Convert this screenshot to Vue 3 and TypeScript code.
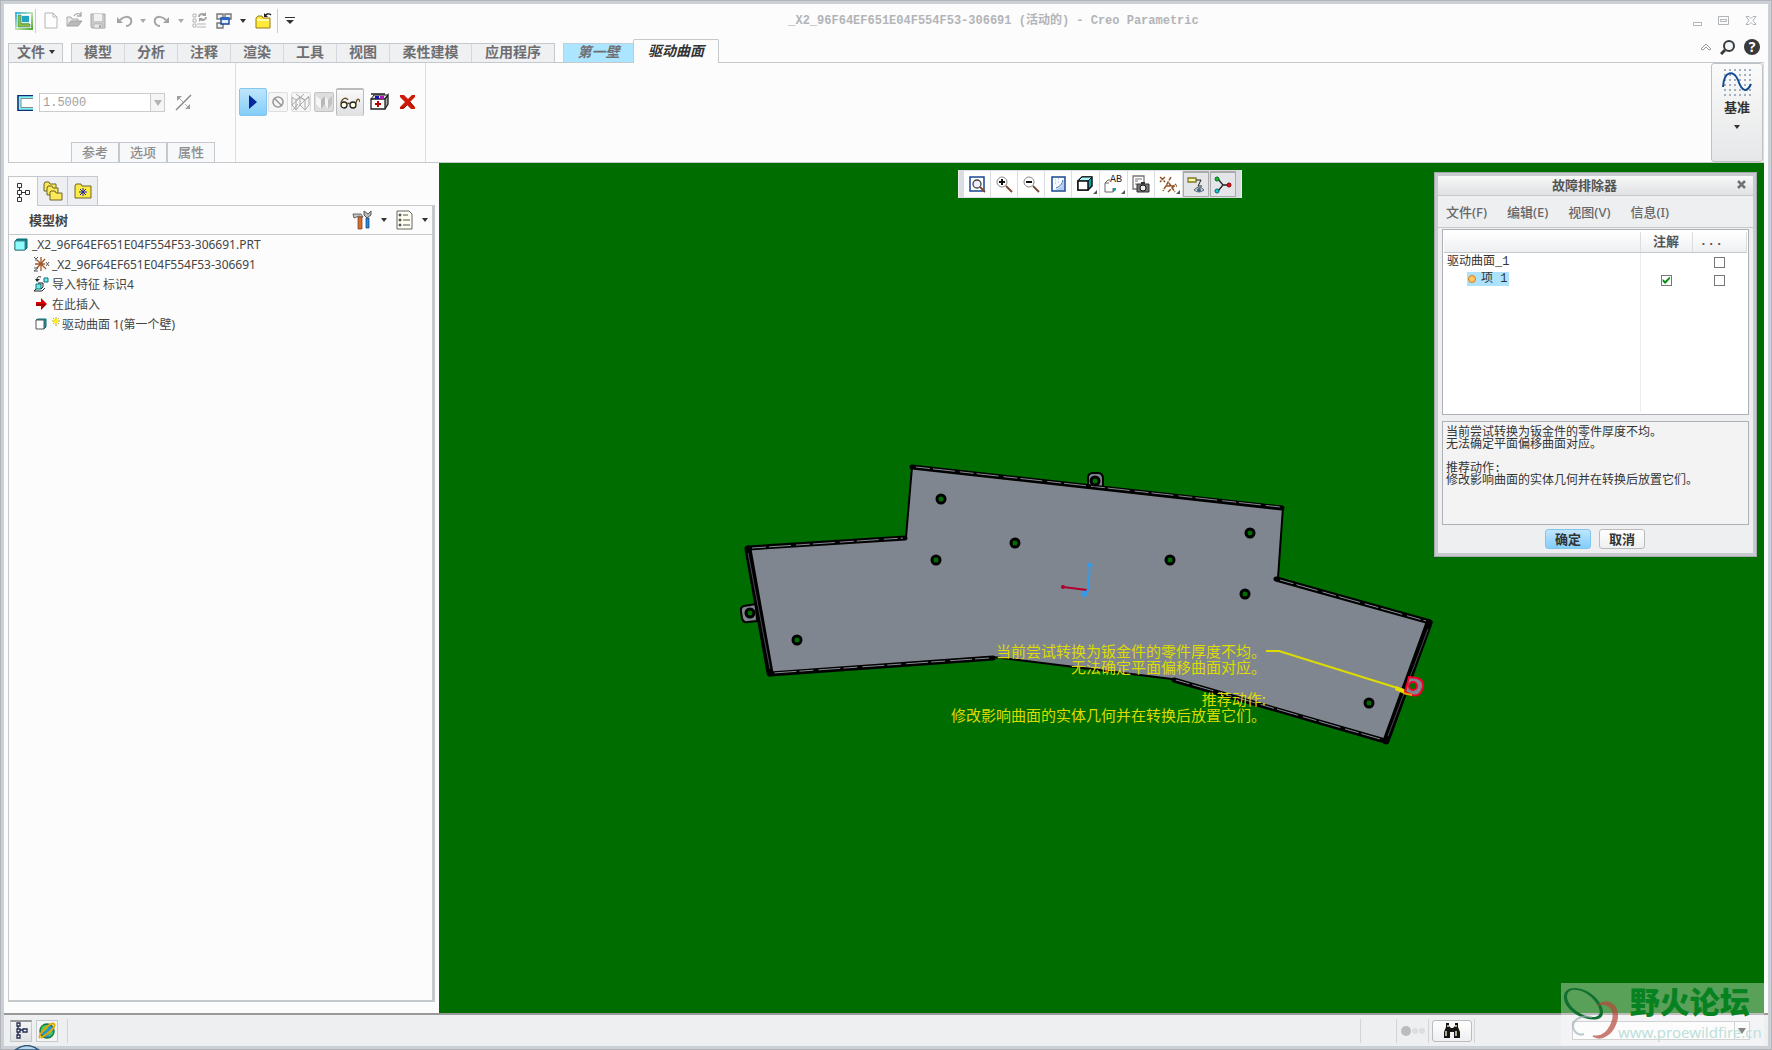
<script setup lang="ts">
import { ref } from 'vue'

interface Hole { x: number; y: number }

const modelName = '_X2_96F64EF651E04F554F53-306691'
const ribbonTabs: string[] = ['模型', '分析', '注释', '渲染', '工具', '视图', '柔性建模', '应用程序']
const optionTabs: string[] = ['参考', '选项', '属性']
const dialogMenus: string[] = ['文件(F)', '编辑(E)', '视图(V)', '信息(I)']
const thickness = ref('1.5000')
const noted = ref(true)
const message = ref('当前尝试转换为钣金件的零件厚度不均。\n无法确定平面偏移曲面对应。\n\n推荐动作:\n修改影响曲面的实体几何并在转换后放置它们。')
const holes: Hole[] = [
  { x: 941, y: 499 }, { x: 1015, y: 543 }, { x: 936, y: 560 }, { x: 797, y: 640 },
  { x: 1250, y: 533 }, { x: 1170, y: 560 }, { x: 1245, y: 594 }, { x: 1369, y: 703 },
  { x: 750, y: 613 }, { x: 1095, y: 481 },
]
</script>

<template>
  <div class="window">
    <header class="titlebar">
      <div class="quick">
        <button class="ib logo" aria-label="Creo">
          <svg width="18" height="18" viewBox="0 0 18 18"><defs><linearGradient id="lg" x1="0" y1="0" x2="1" y2="1"><stop offset="0" stop-color="#35b5e8" /><stop offset=".5" stop-color="#bfe5b0" /><stop offset="1" stop-color="#4fae2e" /></linearGradient></defs><rect x="1" y="1" width="16" height="16" fill="#fff" stroke="url(#lg)" stroke-width="2" /><rect x="3" y="3" width="11" height="12" fill="#a5ca4a" /><path d="M6 3h8v8H6z" fill="#dff3fa" /><path d="M7 4h7v6H7z" fill="#21a5c4" /><path d="M3 3h3v9h9v3H3z" fill="#8fc23f" stroke="#2b7b8a" stroke-width=".6" /></svg>
        </button>
        <button class="ib new" aria-label="新建"><svg width="14" height="17" viewBox="0 0 14 17"><path d="M1 1h8l4 4v11H1zM9 1v4h4" fill="#fdfdfd" stroke="#b4b4b4" /></svg></button>
        <button class="ib open" aria-label="打开"><svg width="17" height="17" viewBox="0 0 17 17"><path d="M1 14V5h4l1 2h6v2" fill="#e8e8e8" stroke="#aaa" /><path d="M1 14l4-5h11l-4 5z" fill="#b9b9b9" stroke="#a4a4a4" /><path d="M8 4c2-3 5-3 7-1M15 0v4h-4" fill="none" stroke="#aaa" stroke-width="1.3" /></svg></button>
        <button class="ib save" aria-label="保存"><svg width="16" height="16" viewBox="0 0 16 16"><path d="M1 1h14v14H2l-1-1z" fill="#c9c9c9" stroke="#a9a9a9" /><path d="M4 1h8v7H4z" fill="#f2f2f2" /><path d="M4 11h8v4H4z" fill="#e9e9e9" stroke="#aaa" stroke-width=".6" /><path d="M9 12h2v3H9z" fill="#aaa" /></svg></button>
        <button class="ib undo" aria-label="撤消"><svg width="16" height="14" viewBox="0 0 16 14"><path d="M3 6c4-4 9-4 11-1 1 4-1 7-5 7" fill="none" stroke="#a2a2a2" stroke-width="2" /><path d="M0 3v6h6z" fill="#a2a2a2" /></svg></button>
        <i class="caret pale"></i>
        <button class="ib redo" aria-label="重做"><svg width="16" height="14" viewBox="0 0 16 14"><path d="M13 6C9 2 4 2 2 5c-1 4 1 7 5 7" fill="none" stroke="#a2a2a2" stroke-width="2" /><path d="M16 3v6h-6z" fill="#a2a2a2" /></svg></button>
        <i class="caret pale"></i>
        <button class="ib regen" aria-label="重新生成"><svg width="16" height="17" viewBox="0 0 16 17"><path d="M1 2h3v3H1zM1 7h3v3H1zM1 12h3v3H1zM5 12h9M5 15h9" fill="none" stroke="#b6b6b6" /><path d="M7 5c0-3 4-4 6-2M14 5c0 3-4 4-6 2" fill="none" stroke="#a0a0a0" stroke-width="1.6" /><path d="M14 0v4h-4zM7 10V6h4z" fill="#a0a0a0" /></svg></button>
        <button class="ib windows" aria-label="窗口"><svg width="16" height="16" viewBox="0 0 16 16"><path d="M1 1h6v5H1zM9 1h6v5H9zM1 10h6v5H1z" fill="#eee" stroke="#777" stroke-width="1.4" /><path d="M5 5h8v6H5z" fill="#e3efff" stroke="#174591" stroke-width="1.4" /><path d="M5 4h8v3H5z" fill="#2e66c8" /></svg></button>
        <i class="caret"></i>
        <button class="ib folder" aria-label="关闭窗口"><svg width="17" height="18" viewBox="0 0 17 18"><path d="M1 16V6l2-2h4l1 2h7v10z" fill="#ffe93b" stroke="#987c12" /><path d="M2 8h12" stroke="#fff9b0" stroke-width="2" /><path d="M10 4c1-2 4-3 6-1" fill="none" stroke="#222" stroke-width="1.4" /><path d="M9 1v4h4z" fill="#222" /></svg></button>
        <i class="vline"></i>
        <button class="ib custom" aria-label="自定义"><svg width="10" height="8" viewBox="0 0 10 8"><path d="M0 0h10v1H0zM1 3h8L5 7z" fill="#333" /></svg></button>
      </div>
      <h1>{{ modelName }} (活动的) - Creo Parametric</h1>
      <div class="winbtns">
        <button class="ib" aria-label="最小化"><svg width="11" height="14" viewBox="0 0 11 14"><path d="M1.500 8.500h8v3h-8z" fill="#fff" stroke="#b0b4b8" /></svg></button>
        <button class="ib" aria-label="还原"><svg width="12" height="10" viewBox="0 0 12 10"><path d="M.5.5h10v8H.5zM2.500 3.500h6v2h-6z" fill="none" stroke="#b0b4b8" /></svg></button>
        <button class="ib" aria-label="关闭"><svg width="12" height="10" viewBox="0 0 12 10"><path d="M1 .5h3l2 2 2-2h3L8 4.500l3 4H8l-2-2-2 2H1l3-4z" fill="#fff" stroke="#b0b4b8" /></svg></button>
      </div>
    </header>

    <nav class="tabs">
      <button class="tab file">文件<i class="caret"></i></button>
      <div class="tabgroup">
        <button v-for="t in ribbonTabs" :key="t" class="tab">{{ t }}</button>
      </div>
      <button class="tab wall">第一壁</button>
      <button class="tab active">驱动曲面</button>
      <div class="tabtools">
        <button class="ib" aria-label="折叠功能区"><svg width="12" height="8" viewBox="0 0 12 8"><path d="M1 6l5-5 5 5-2 1-3-3-3 3z" fill="#fff" stroke="#999" /></svg></button>
        <button class="ib" aria-label="搜索"><svg width="16" height="16" viewBox="0 0 16 16"><circle cx="9" cy="7" r="5" fill="#eff6fc" stroke="#3a3a3a" stroke-width="2" /><path d="M1 15l4-4" stroke="#3a3a3a" stroke-width="3" /></svg></button>
        <button class="ib help" aria-label="帮助">?</button>
      </div>
    </nav>

    <section class="ribbon">
      <div class="group first">
        <div class="controls">
          <svg class="side" width="16" height="16" viewBox="0 0 16 16"><path d="M16 0H0v16h16v-3H4V3h12z" fill="#7ff4f8" /><path d="M16 .5H1v15h15" fill="none" stroke="#0c2d70" stroke-width="1.500" /><path d="M16 3.500H4v9h12" fill="none" stroke="#888" /></svg>
          <div class="combo">
            <input v-model="thickness" aria-label="厚度" disabled />
            <button aria-label="展开" disabled><i class="caret big"></i></button>
          </div>
          <button class="ib flip" aria-label="反向" disabled><svg width="17" height="17" viewBox="0 0 17 17"><path d="M1 16L16 1" stroke="#888" stroke-width="1.400" /><path d="M3 3l5 5M10 10l4 4" stroke="#b0b0b0" /><path d="M2 2h5L2 7zM15 15h-5l5-5z" fill="#a0a0a0" /></svg></button>
        </div>
        <div class="subtabs">
          <button v-for="o in optionTabs" :key="o">{{ o }}</button>
        </div>
      </div>
      <div class="group actions">
        <button class="act play" aria-label="恢复"><svg width="8" height="14" viewBox="0 0 8 14"><path d="M0 0l8 7-8 7z" fill="#06269a" /></svg></button>
        <button class="act small" aria-label="无预览" disabled><svg width="14" height="14" viewBox="0 0 14 14"><circle cx="7" cy="7" r="5" fill="none" stroke="#999" stroke-width="1.600" /><path d="M3 3l8 8" stroke="#999" stroke-width="1.600" /></svg></button>
        <button class="act small wire" aria-label="线框" disabled><svg width="20" height="18" viewBox="0 0 20 18"><path d="M1 4l4 3v10M1 4v8l4 5 4-5V4L5 7M9 4l5 3v10l-5-5M14 7l4-3v8l-4 5M1 12l12-11M5 1l8 6M9 12l9-9M2 17l5-6" fill="none" stroke="#aaa" /></svg></button>
        <button class="act small shade" aria-label="着色" disabled><svg width="20" height="18" viewBox="0 0 20 18"><path d="M2 3l5 4v9L2 11z" fill="#f7f7f7" /><path d="M7 7l4-4v8l-4 5z" fill="#b8b8b8" /><path d="M11 3l3 4v9l-3-5z" fill="#f4f4f4" /><path d="M14 7l4-4v8l-4 5z" fill="#c2c2c2" /></svg></button>
        <button class="act glasses" aria-label="预览"><svg width="20" height="12" viewBox="0 0 20 12"><circle cx="4" cy="8" r="3" fill="#fffee0" stroke="#222" stroke-width="1.300" /><circle cx="13" cy="8" r="3" fill="#fffee0" stroke="#222" stroke-width="1.300" /><path d="M7 7c1-1 2-1 3 0M1 6c1-5 5-6 7-3M16 6c1-5 3-5 4-1" fill="none" stroke="#6b4e20" stroke-width="1.300" /></svg></button>
        <button class="ib kit" aria-label="故障排除"><svg width="19" height="17" viewBox="0 0 19 17"><path d="M1 6l3-4h14l-3 4z" fill="#ddd" stroke="#222" /><path d="M1 1h14M15 6l3-4v9l-3 5" fill="#aaa" stroke="#222" stroke-width="1.300" /><path d="M1 6h14v10H1z" fill="#fff" stroke="#222" stroke-width="1.300" /><path d="M5 3h4v3H5z" fill="#1212b5" /><path d="M10 3h4v3h-4z" fill="#b414b4" /><path d="M7 8h2v2h2v2H9v2H7v-2H5v-2h2z" fill="#b80000" /></svg></button>
        <button class="ib cancel" aria-label="取消特征"><svg width="17" height="16" viewBox="0 0 17 16"><path d="M1 1h4l4 4 4-4h3v2l-5 5 5 5v2h-4l-4-4-4 4H1v-2l5-5-5-5z" fill="#d01a08" /><path d="M2 14h3l3-3M11 8l4 5" fill="none" stroke="#850000" /></svg></button>
      </div>
      <button class="datum">
        <svg width="30" height="30" viewBox="0 0 30 30"><g stroke="#a0b2c2" stroke-width="2" stroke-dasharray="2 3"><path d="M2 2h28M2 7h28M2 12h28M2 17h28M2 22h28M2 27h28" /></g><path d="M1 19C2 2 12 2 16 12c4 12 9 13 13 4" fill="none" stroke="#134a94" stroke-width="2" /></svg>
        <span>基准</span>
        <i class="caret"></i>
      </button>
    </section>

    <main class="work">
      <aside class="side-panel">
        <div class="ptabs">
          <button class="on" aria-label="模型树"><svg width="14" height="20" viewBox="0 0 14 20"><path d="M1.500 1.500h4v4h-4zM1.500 8.500h4v4h-4zM9.500 8.500h4v4h-4zM1.500 15.500h4v4h-4zM3.500 5v3M3.500 12v3M5 10.500h4" fill="none" stroke="#333" /></svg></button>
          <button aria-label="文件夹浏览器"><svg width="20" height="20" viewBox="0 0 20 20"><g fill="#fbe95a" stroke="#6b6426"><path d="M1 10V3l1-2h4l1 2h6v7z" /><path d="M4 14V7l1-2h4l1 2h5v7z" /><path d="M7 19v-8l1-1h4l1 2h6v7z" /></g></svg></button>
          <button aria-label="收藏夹"><svg width="18" height="16" viewBox="0 0 18 16"><path d="M1 15V3l1-2h5l1 2h9v12z" fill="#fcea45" stroke="#6b6426" /><path d="M9 5v8M5 9h8M6 6l6 6M12 6l-6 6" stroke="#1a24a0" /></svg></button>
        </div>
        <div class="panel">
          <div class="phead">
            <h2>模型树</h2>
            <button class="ib" aria-label="设置"><svg width="20" height="20" viewBox="0 0 20 20"><path d="M1 4h8l2 3H9L7 6 2 8z" fill="#ccc" stroke="#444" stroke-width=".8" /><path d="M6 7h4v12H6z" fill="#d56f21" stroke="#733" stroke-width=".7" /><path d="M14 8h3v10h-3z" fill="#238de0" stroke="#136" stroke-width=".7" /><path d="M12 1v4l3 3 4-3V1l-3 3z" fill="#bbb" stroke="#555" /></svg></button>
            <i class="caret"></i>
            <button class="ib list" aria-label="显示"><svg width="17" height="20" viewBox="0 0 17 20"><path d="M1 1h12l3 3v15H1z" fill="#fffff2" stroke="#666" /><path d="M7 5h5M7 10h7M7 15h7" stroke="#555" /><g fill="none" stroke="#222"><circle cx="4" cy="5" r="1" /><circle cx="4" cy="10" r="1" /><circle cx="4" cy="15" r="1" /></g></svg></button>
            <i class="caret"></i>
          </div>
          <ul class="tree">
            <li class="root"><svg width="14" height="13" viewBox="0 0 14 13"><path d="M1 3l2-2h10v9l-2 2H1z" fill="#087f86" stroke="#087078" /><path d="M1 3h10v9H1z" fill="#8ffcfc" stroke="#488" /></svg>{{ modelName }}.PRT</li>
            <li><svg width="17" height="16" viewBox="0 0 17 16"><path d="M2 8h10M8 1v14M4 4l9 9M12 3L4 12" stroke="#a4552a" stroke-width="1.300" /><path d="M1 1l2 2 2-2M3 3v2M1 12h4l-4 3h4M13 6l3 4M16 6l-3 4" fill="none" stroke="#555" /></svg>{{ modelName }}</li>
            <li><svg width="17" height="16" viewBox="0 0 17 16"><path d="M11 2h4v4h-4zM3 8h5v5H3z" fill="#79e7ea" stroke="#077" /><path d="M3 13l-2 2h8l3-3M8 13l2-2V7H5M8 1C4 0 4 2 4 4" fill="none" stroke="#222" /><path d="M2 3h5L4 6z" fill="#222" /></svg>导入特征 标识4</li>
            <li><svg width="17" height="12" viewBox="0 0 17 12"><path d="M3 4h5V0l6 6-6 6V8H3z" fill="#d50000" /><path d="M3 7h9l-4 4" fill="none" stroke="#710000" /></svg>在此插入</li>
            <li><svg width="17" height="12" viewBox="0 0 17 12"><path d="M3 2l2-1h8v8l-2 2" fill="#0c9da1" stroke="#087078" /><path d="M3 2h8v9H3z" fill="#fff" stroke="#555" /></svg><svg class="spark" width="8" height="9" viewBox="0 0 8 9"><path d="M4 0v9M0 4h8M1 1l6 6M7 1L1 7" stroke="#a09800" stroke-width=".8" /><path d="M2 2h4v4H2z" fill="#ffee18" /></svg><span>驱动曲面 1(第一个壁)</span></li>
          </ul>
        </div>
      </aside>

      <section class="viewport">
        <svg class="part" width="720" height="300" viewBox="730 450 720 300">
          <g fill="#80868f" stroke="#000" stroke-width="2">
            <path d="M756 604l-12 2q-4 1-3 6l1 6q1 5 6 4l9-1z" />
            <path d="M1088 488v-10q0-5 5-5h5q5 0 5 6v9z" />
            <path d="M747 548L906 537 912 467 1283 507 1278 578 1430 622 1386 741 1172 679 993 657 769 674z" />
          </g>
          <g fill="none" stroke="#000" stroke-width="6" stroke-linejoin="round" stroke-linecap="round">
            <path d="M748 548L905 538M912 467L1282 508M1276 579L1430 622M1174 680L1385 741M993 658L770 674" stroke-width="5" />
            <path d="M748 549L770 673M1429 623L1386 741" stroke-width="7" />
          </g>
          <g fill="none" stroke="#858b94" stroke-width="1">
            <path d="M752 548L903 538M916 467L1280 507M1280 580L1426 621M1176 680L1380 739M989 658L773 673" stroke-dasharray="14 3 22 5" />
            <path d="M748 553L770 669M1428 629L1388 736" stroke="#454950" />
          </g>
          <g fill="#006d00" stroke="#000" stroke-width="3">
            <circle v-for="h in holes" :key="`${h.x}-${h.y}`" :cx="h.x" :cy="h.y" r="4" />
          </g>
          <path d="M1063 587L1087 590" stroke="#b00030" stroke-width="2" /><circle cx="1063" cy="587" r="2" fill="#b00030" />
          <path d="M1090 566L1088 590 1084 594" fill="none" stroke="#369be8" stroke-width="2" /><circle cx="1090" cy="565" r="2.500" fill="#369be8" /><circle cx="1084" cy="594" r="3" fill="#369be8" />
          <path d="M1266 651h13L1404 690" fill="none" stroke="#dcdc00" stroke-width="2" /><path d="M1396 686l14 6-3 3-12-5z" fill="#e5df00" />
          <path d="M1409 677l8 1q7 2 6 9l-2 5q-3 5-9 3l-7-3z" fill="#80868f" stroke="#f00028" stroke-width="2" />
          <path d="M1403 693l9 2" stroke="#f0a000" stroke-width="2" />
          <circle cx="1413" cy="686" r="4" fill="#006d00" stroke="#f00028" stroke-width="2" />
        </svg>
        <p class="note">{{ message }}</p>

        <div class="viewbar">
          <button aria-label="重新调整"><svg width="17" height="17" viewBox="0 0 17 17"><path d="M1 1h14v14H1z" fill="#fff" stroke="#174591" stroke-width="1.500" /><circle cx="8" cy="8" r="4" fill="#eef" stroke="#444" stroke-width="1.300" /><path d="M11 11l5 5" stroke="#7c4b38" stroke-width="2" /></svg></button>
          <button aria-label="放大"><svg width="17" height="17" viewBox="0 0 17 17"><circle cx="6" cy="6" r="5" fill="#fff" stroke="#888" /><path d="M3 6h6M6 3v6" stroke="#111" stroke-width="2" /><path d="M10 10l6 6" stroke="#7c4b38" stroke-width="2" /></svg></button>
          <button aria-label="缩小"><svg width="17" height="17" viewBox="0 0 17 17"><circle cx="6" cy="6" r="5" fill="#fff" stroke="#888" /><path d="M3 6h6" stroke="#111" stroke-width="2" /><path d="M10 10l6 6" stroke="#7c4b38" stroke-width="2" /></svg></button>
          <button aria-label="重画"><svg width="15" height="16" viewBox="0 0 15 16"><path d="M1 1h13v14H1z" fill="#f7fbff" stroke="#174591" stroke-width="1.500" /><path d="M4 14Q12 11 13 3v11z" fill="#b3cdf2" /><path d="M5 12q6-2 7-8" fill="none" stroke="#4673b5" /><path d="M4 4h1M7 3h1M4 7h1M7 6h1" stroke="#9ab5dc" /></svg></button>
          <button class="more" aria-label="显示样式"><svg width="17" height="16" viewBox="0 0 17 16"><path d="M1 5l4-4h10v9l-4 4H1z" fill="#0aa2a7" stroke="#111" stroke-width="1.500" /><path d="M1 5l4-4h10l-4 4z" fill="#a6fcfc" stroke="#111" /><path d="M1 5h10v9H1z" fill="#fff" stroke="#111" stroke-width="1.500" /></svg></button>
          <button class="more ab" aria-label="已命名视图"><svg width="13" height="14" viewBox="0 0 13 14"><path d="M1 4l3-3h2M1 4v9h8l3-3M1 4h4M9 13V9" fill="none" stroke="#666" /><path d="M9 9h3v2l-3 2z" fill="#159ba0" /></svg><span>AB</span></button>
          <button aria-label="视图管理器"><svg width="18" height="18" viewBox="0 0 18 18"><path d="M1 1h11v13H1z" fill="#fff" stroke="#777" stroke-width="1.300" /><path d="M3 4h7M3 6h3M3 9h2" stroke="#777" /><path d="M5 9h12v8H5z" fill="#777" stroke="#333" /><path d="M9 7h4v2H9z" fill="#333" /><circle cx="11" cy="13" r="3" fill="#eee" stroke="#111" /></svg></button>
          <button class="more" aria-label="基准显示"><svg width="19" height="17" viewBox="0 0 19 17"><path d="M1 1l5 5M6 1L1 6M12 1L4 15M7 10h11M9 16l8-8M10 7l6 9" fill="none" stroke="#925225" stroke-width="1.500" stroke-dasharray="4 1" /></svg></button>
          <button class="on" aria-label="注释显示"><svg width="18" height="18" viewBox="0 0 18 18"><path d="M1 2h8v4H1z" fill="#fcf7a1" stroke="#7e7a20" stroke-width="1.300" /><path d="M9 4h5l-3 6h4" fill="none" stroke="#222" /><path d="M7 14q5-6 10 0-5 4-10 0z" fill="#c6ccd2" stroke="#666" /><circle cx="12" cy="14" r="2" fill="#38688f" /></svg></button>
          <button class="on" aria-label="旋转中心"><svg width="18" height="18" viewBox="0 0 18 18"><path d="M4 3l5 6-5 6M9 9h6" fill="none" stroke="#222" stroke-width="1.300" /><circle cx="3" cy="3" r="2" fill="#13c013" stroke="#063" /><circle cx="3" cy="15" r="2" fill="#1bcbd3" stroke="#066" /><circle cx="15" cy="9" r="2" fill="#e41212" stroke="#800" /></svg></button>
        </div>

        <div class="dialog" role="dialog" aria-label="故障排除器">
          <div class="dtitle"><h2>故障排除器</h2><button class="ib" aria-label="关闭对话框"><svg width="9" height="9" viewBox="0 0 9 9"><path d="M1 1l7 7M8 1L1 8" stroke="#707478" stroke-width="2.500" /></svg></button></div>
          <div class="dmenu"><button v-for="m in dialogMenus" :key="m">{{ m }}</button></div>
          <div class="dtable">
            <table>
              <thead><tr><th aria-label="项目"></th><th>注解</th><th>...</th></tr></thead>
              <tbody>
                <tr><td>驱动曲面_1</td><td></td><td><input type="checkbox" aria-label="驱动曲面_1" /></td></tr>
                <tr><td class="indent"><span class="sel"><i></i>项 1</span></td><td><input v-model="noted" type="checkbox" aria-label="项 1 注解" /></td><td><input type="checkbox" aria-label="项 1" /></td></tr>
                <tr class="rest"><td></td><td></td><td></td></tr>
              </tbody>
            </table>
          </div>
          <textarea v-model="message" class="dmsg" aria-label="说明" readonly></textarea>
          <div class="dbtns"><button class="ok">确定</button><button>取消</button></div>
        </div>
      </section>
    </main>

    <footer class="status">
      <button class="sbtn pressed" aria-label="导航器"><svg width="13" height="18" viewBox="0 0 13 18"><path d="M2 1h3v3H2zM2 7h3v3H2zM2 13h3v3H2zM8 7h4v3H8zM3 4v3M3 10v3M5 8h3" fill="#fff" stroke="#222b50" stroke-width="1.300" /></svg></button>
      <button class="sbtn" aria-label="浏览器"><svg width="18" height="18" viewBox="0 0 18 18"><circle cx="9" cy="9" r="7" fill="#2296d8" stroke="#17763b" stroke-width="1.500" /><path d="M4 4l5-1 1 4-4 3-3-1zM10 10l4-2 1 4-4 3z" fill="#46c85c" /><path d="M2 16C-1 13 13-1 16 2s-8 11-13 14" fill="none" stroke="#e6a900" stroke-width="2" /></svg></button>
      <i class="vline"></i>
      <div class="sright">
        <i class="vline"></i>
        <i class="vline wide"></i>
        <div class="dots"><i></i><i></i><i></i></div>
        <i class="vline"></i>
        <button class="find" aria-label="查找"><svg width="16" height="15" viewBox="0 0 16 15"><path d="M2 0h3v3l2 2h2l2-2V0h3v4l2 5v6h-6V9H6v6H0V9l2-5z" fill="#161616" /><path d="M2 8v5M12 8v5M4 2v2M12 2v2" stroke="#e0e0c0" stroke-width="1.500" /></svg></button>
        <i class="vline"></i>
        <div class="filter">
          <select aria-label="过滤器"><option></option></select>
          <i class="caret big"></i>
        </div>
      </div>
      <svg class="orb" width="26" height="5" viewBox="0 0 26 5"><path d="M1 5q12-9 24 0z" fill="#b9d5ea" stroke="#2a5578" stroke-width="1.300" /></svg>
    </footer>

    <div class="watermark">
      <svg width="60" height="58" viewBox="0 0 60 58"><path fill-rule="evenodd" d="M2 14C0-1 22 0 34 13c9 10 9 19 2 21C24 37 4 27 2 14zM5 12c1 11 17 21 28 20 7-1 6-9-1-17C23 4 5 0 5 12z" fill="#10702f" /><path d="M36 20c10-7 21 0 19 14-3 14-15 23-24 17 9 2 17-5 20-17 2-11-6-17-15-14z" fill="#b5483a" stroke="#b5483a" stroke-width="1.500" opacity=".7" /><path d="M30 32c-13-3-22 5-18 13 3 5 7 5 10 4" fill="none" stroke="#a4b3bc" stroke-width="2" opacity=".7" /></svg>
      <div><strong>野火论坛</strong><span>www.proewildfire.cn</span></div>
    </div>
  </div>
</template>

<style>
body { margin: 0; }
</style>

<style scoped>
* { box-sizing: border-box; }
button, input, textarea, select { font: inherit; color: inherit; margin: 0; padding: 0; border-radius: 0; }
button { cursor: default; }
h1, h2, p, ul { margin: 0; padding: 0; }
svg { display: block; flex: none; }
.window {
  position: relative;
  min-height: 100vh;
  display: flex;
  flex-direction: column;
  border: 1px solid #b2b6ba;
  box-shadow: inset 0 0 0 3px #cad0d5;
  padding: 3px;
  background: #fcfcfc;
  color: #444;
  font: 12px "Noto Sans", "Noto Sans CJK SC", sans-serif;
}
.ib { display: flex; align-items: center; justify-content: center; border: 0; background: none; }
.caret { flex: none; width: 0; height: 0; border: 3px solid transparent; border-top: 4px solid #333; border-bottom: 0; }
.caret.pale { border-top-color: #aaa; }
.caret.big { border-width: 4px; border-top-width: 6px; border-bottom: 0; border-top-color: #b4b4b4; }
.vline { flex: none; width: 1px; height: 24px; background: #ccc; }

/* title bar */
.titlebar { display: flex; align-items: center; height: 35px; padding: 0 11px; }
.quick { display: flex; align-items: center; height: 24px; margin-bottom: 2px; }
.logo { width: 21px; height: 24px; border-right: 1px solid #ccc; padding-right: 3px; }
.new { width: 30px; }
.save { margin: 0 11px 0 7px; }
.undo { margin-right: 7px; }
.redo { margin: 0 9px 0 7px; }
.regen { margin: 0 8px; }
.windows { margin-right: 8px; }
.folder { margin: 0 5px 0 9px; }
.custom { margin-left: 7px; }
h1 { flex: 1; text-align: center; font: bold 12px/20px "Liberation Mono", "Noto Sans CJK SC", monospace; color: #b2b4b8; margin-bottom: 2px; white-space: nowrap; }
.winbtns { display: flex; gap: 15px; align-items: center; height: 24px; margin-bottom: 2px; }

/* ribbon tabs */
.tabs { display: flex; align-items: flex-end; height: 23px; margin: 0 4px; position: relative; z-index: 1; }
.tab { height: 19px; border: 0; border-right: 1px solid #d5d8dc; background: #eff0f2; padding: 0 11px 2px; font-size: 14px; line-height: 16px; font-weight: bold; color: #6e6e71; white-space: nowrap; min-width: 53px; }
.tabgroup { display: flex; border: 1px solid #c5c9cd; border-bottom: 0; margin: 0 8px; }
.tabgroup .tab { height: 18px; }
.tabgroup .tab:nth-child(n+7) { width: 82px; }
.tabgroup .tab:last-child { border-right: 0; }
.file { display: flex; align-items: center; gap: 4px; width: 55px; height: 19px; padding: 0 8px 2px; border: 1px solid #c5c9cd; border-bottom: 0; }
.wall { width: 70px; background: #ace5ff; border: 1px solid #c0d0d8; border-width: 1px 0 0 1px; font-style: italic; }
.active { width: 86px; height: 24px; margin-bottom: -1px; padding-bottom: 1px; background: #fcfcfc; border: 1px solid #c5c9cd; border-bottom: 0; font-style: italic; color: #333; border-radius: 2px 2px 0 0; }
.tabtools { display: flex; align-items: center; gap: 8px; margin-left: auto; height: 24px; margin-bottom: 3px; margin-right: 4px; }
.help { width: 16px; height: 16px; border-radius: 8px; background: #3a3a3a; color: #fff; font-weight: bold; font-size: 14px; line-height: 16px; }

/* ribbon */
.ribbon { display: flex; height: 101px; margin: 0 4px; border: 1px solid #c5c9cd; border-right-color: #ddd; }
.group { border-right: 1px solid #ddd; }
.first { width: 227px; display: flex; flex-direction: column; justify-content: space-between; }
.controls { display: flex; align-items: center; padding: 30px 0 0 8px; }
.combo { display: flex; width: 126px; height: 19px; margin: 0 10px 0 6px; border: 1px solid #ccc; background: #fff; }
.combo input { flex: 1; min-width: 0; border: 0; background: none; padding-left: 3px; color: #a0a0a0; font: 12px "Liberation Mono", monospace; }
.combo button { width: 14px; border: 0; border-left: 1px solid #ccc; background: #f5f5f5; display: flex; align-items: center; justify-content: center; }
.subtabs { display: flex; padding-left: 62px; }
.subtabs button { width: 48px; height: 20px; padding-bottom: 2px; border: 1px solid #c5c9cd; border-bottom: 0; background: #f7f8f9; font-size: 13px; line-height: 16px; font-weight: 500; color: #8c8c8c; }
.actions { display: flex; align-items: center; width: 190px; padding: 0 0 22px 3px; }
.act { display: flex; align-items: center; justify-content: center; width: 28px; height: 28px; border: 1px solid #83c6ed; border-radius: 2px; background: #8fd2f9; }
.play { background: linear-gradient(#bfe5fc, #83cdf9); }
.small { width: 20px; height: 20px; margin: 0 1px; border: 1px solid #ddd; background: #f6f6f6; }
.wire { margin: 0 3px 0 2px; }
.shade { background: #ddd; border-color: #c3c3c3; margin-left: 0; }
.glasses { margin-left: 1px; border: 1px solid #bbb; border-width: 2px 1px 0; background: linear-gradient(#fafafa, #dedfe1); }
.kit { margin: 0 10px 0 6px; }
.datum { display: flex; flex-direction: column; align-items: center; width: 52px; margin-left: auto; padding-top: 4px; border: 1px solid #bfc2c5; border-radius: 3px; background: linear-gradient(#fafafa, #e6e7e8); font-size: 13px; line-height: 18px; font-weight: bold; color: #333; }
.datum .caret { margin-top: 9px; }

/* model tree */
.work { flex: 1; display: flex; margin-right: 4px; }
.side-panel { display: flex; flex-direction: column; width: 435px; padding: 13px 4px 11px; }
.ptabs { display: flex; position: relative; height: 30px; margin-bottom: -1px; }
.ptabs button { display: flex; align-items: center; justify-content: center; width: 30px; border: 1px solid #c5c9cd; border-left: 0; background: #eeeff2; }
.ptabs .on { background: #fcfcfc; border-left: 1px solid #c5c9cd; border-bottom: 0; }
.panel { flex: 1; border: 1px solid #c5c9cd; border-width: 1px 3px 2px 1px; }
.phead { display: flex; align-items: center; height: 29px; padding: 0 4px 0 20px; border-bottom: 1px solid #c5c9cd; }
.phead .caret { margin-left: 9px; }
.list { margin-left: 9px; }
h2 { font-size: 13px; line-height: 18px; }
.phead h2 { flex: 1; }
.tree { list-style: none; }
.tree li { display: flex; align-items: center; gap: 2px; height: 20px; padding: 0 0 2px 24px; white-space: nowrap; }
.tree .root { padding-left: 5px; gap: 4px; }
.spark { margin-top: -6px; }

/* graphics area */
.viewport { position: relative; flex: 1; background: #006d00; overflow: hidden; }
.part { position: absolute; left: 291px; top: 287px; }
.note { position: absolute; left: 499px; top: 480px; width: 328px; text-align: right; white-space: pre; font: 15px/16px "Noto Sans CJK SC", sans-serif; color: #dcdc00; }
.viewbar { position: absolute; left: 519px; top: 7px; display: flex; gap: 1px; padding: 1px 5px; background: #d9dce0; border: 1px solid #eceef0; border-width: 0 1px; }
.viewbar button { position: relative; display: flex; align-items: center; justify-content: center; width: 26px; height: 26px; border: 0; background: #fff; }
.viewbar .more { width: 27px; }
.viewbar .on { border: 1px solid #aaa; border-top-width: 2px; background: #e3e5e8; }
.more::after { content: ""; position: absolute; right: 2px; bottom: 3px; border: 2px solid #555; border-top-color: transparent; border-left-color: transparent; }
.ab svg { margin: 4px 6px 0 0; }
.ab span { position: absolute; left: 10px; top: 3px; font: 10px/12px "Liberation Mono", monospace; color: #222; }

/* troubleshooter */
.dialog { position: absolute; right: 7px; top: 9px; width: 323px; padding: 3px; border: 1px solid #a5a9ad; background: #eeeff1; box-shadow: inset 0 0 0 3px #c7cbcf; }
.dtitle { display: flex; align-items: center; height: 20px; padding: 0 7px 2px 0; background: linear-gradient(#f7f8f8, #dfe1e3); border-bottom: 1px solid #c5c9cd; }
.dtitle h2 { flex: 1; text-align: center; padding-right: 6px; color: #555; }
.dmenu { display: flex; gap: 20px; height: 32px; padding: 0 8px; border-bottom: 1px solid #c5c9cd; }
.dmenu button { border: 0; background: none; font-size: 13px; line-height: 30px; color: #67676a; font-weight: 500; white-space: nowrap; }
.dtable { height: 186px; margin: 1px 4px 6px; padding: 2px 1px; border: 1px solid #aeb1b5; background: #fff; }
table { width: 100%; height: 100%; border-collapse: collapse; table-layout: fixed; }
th { height: 20px; padding: 0; border-bottom: 1px solid #c5c9cd; border-right: 1px solid #ddd; background: linear-gradient(#fff, #eeeff1); font-size: 13px; line-height: 19px; color: #555; }
th:first-child { width: 196px; }
th:nth-child(2) { width: 52px; }
th:nth-child(3) { padding-right: 16px; font-family: "Liberation Mono", monospace; }
td { height: 18px; padding: 0 4px; line-height: 18px; font-family: "Liberation Mono", "Noto Sans CJK SC", monospace; color: #333; text-align: center; }
td:first-child { text-align: left; border-right: 1px solid #ececec; padding-left: 3px; }
td.indent:first-child { padding-left: 23px; }
.rest td { height: auto; }
.sel { display: inline-flex; align-items: center; gap: 5px; height: 14px; padding: 0 2px 0 1px; background: #ace2fb; }
.sel i { width: 8px; height: 8px; border-radius: 4px; border: 1px solid #db7b12; background: #ffc862; }
input[type="checkbox"] { appearance: none; display: block; width: 11px; height: 11px; margin: 1px auto 0; border: 1px solid #777; background: #fff; }
input[type="checkbox"]:checked::before { content: ""; display: block; width: 9px; height: 9px; background: #008c10; clip-path: polygon(10% 40%, 38% 62%, 90% 10%, 90% 38%, 38% 95%, 10% 68%); }
.dmsg { display: block; width: 307px; height: 104px; margin: 0 4px 4px; padding: 5px 3px; resize: none; overflow: hidden; outline: 0; border: 1px solid #aeb1b5; background: #f3f3f3; font: 12px/12px "Liberation Mono", "Noto Sans CJK SC", monospace; color: #333; }
.dbtns { display: flex; justify-content: center; gap: 8px; padding: 0 1px 4px 0; }
.dbtns button { width: 46px; height: 20px; border: 1px solid #bbb; border-radius: 3px; background: linear-gradient(#fff, #eeeff0); font-size: 13px; line-height: 16px; font-weight: bold; color: #333; }
.dbtns .ok { border-color: #83c6ed; background: linear-gradient(#bfe5fc, #83cdf9); }

/* status bar */
.status { position: relative; display: flex; align-items: center; height: 33px; padding: 0 18px 0 6px; border-top: 2px solid #999; background: #eeeff1; }
.sbtn { display: flex; align-items: center; justify-content: center; width: 22px; height: 22px; margin-right: 4px; border: 1px solid #c5c9cd; background: #f5f5f5; }
.pressed { border-top: 2px solid #999; background: linear-gradient(#f5f5f5, #dfe1e3); }
.status .vline { margin-left: 5px; background: #d2d4d8; }
.sright { display: flex; align-items: center; margin-left: auto; }
.status .wide { margin-left: 35px; }
.dots { display: flex; align-items: center; gap: 1px; margin-left: 4px; }
.dots i { width: 6px; height: 6px; border-radius: 5px; background: #ddd; }
.dots i:first-child { width: 10px; height: 10px; background: #bcbcbe; }
.status .sright .dots + .vline { margin-left: 3px; }
.find { display: flex; align-items: center; justify-content: center; width: 40px; height: 22px; margin-left: 3px; border: 1px solid #bbb; border-radius: 3px; background: linear-gradient(#fff, #eeeff0); }
.sright .find + .vline { margin-left: 2px; }
.filter { display: flex; align-items: center; width: 178px; height: 19px; margin-left: 97px; padding-right: 3px; border: 1px solid #bbb; background: #fafafa; }
.filter select { appearance: none; flex: 1; height: 17px; border: 0; border-right: 1px solid #bbb; background: none; outline: 0; margin-right: 3px; }
.filter .caret { border-top-color: #444; }
.orb { position: absolute; left: 10px; bottom: -4px; }

.watermark { position: absolute; right: 7px; bottom: 4px; display: flex; width: 203px; height: 62px; padding: 2px 0 0 1px; background: rgba(255, 255, 255, .35); white-space: nowrap; pointer-events: none; }
.watermark div { display: flex; flex-direction: column; align-items: flex-end; margin-left: -4px; }
.watermark strong { width: 132px; font: 900 30px/36px "Liberation Sans", "Noto Sans CJK SC", sans-serif; color: #078220; }
.watermark span { font: 15px/22px "Noto Sans", sans-serif; color: #bce0da; }
</style>
